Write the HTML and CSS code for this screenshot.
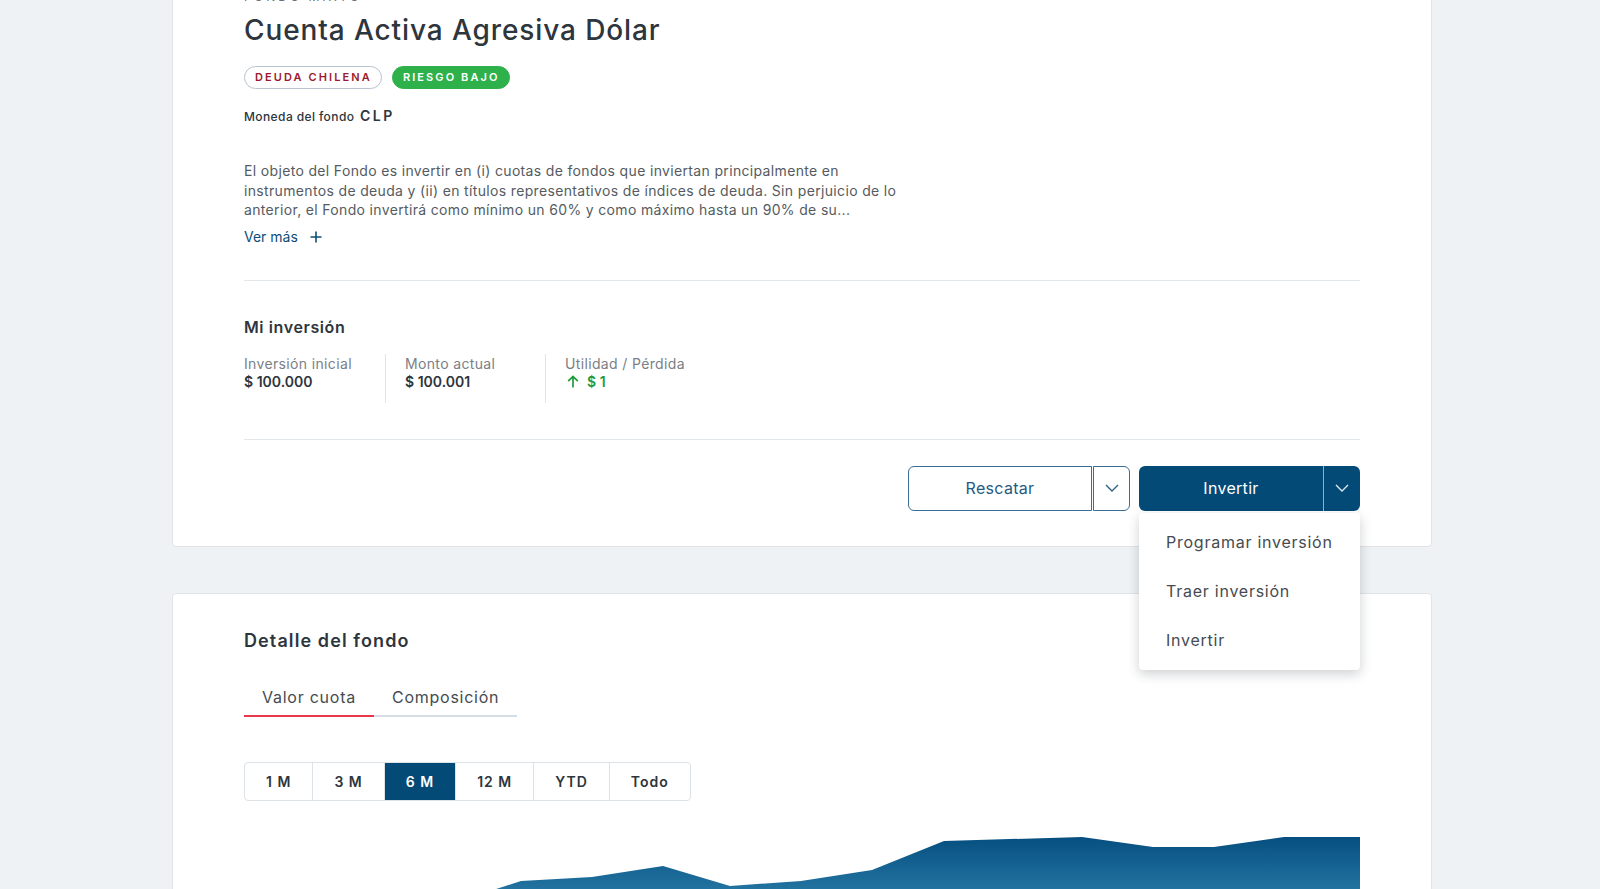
FILE: index.html
```html
<!DOCTYPE html>
<html>
<head>
<meta charset="utf-8" />
<title>Cuenta Activa Agresiva Dólar</title>
<link rel="stylesheet" href="styles.css">
</head>
<body>
<div class="main">

<section class="card fund">
  <div class="kicker">Fondo Mixto</div>
  <h1 class="fund-name">Cuenta Activa Agresiva Dólar</h1>
  <div class="tags">
    <span class="tag tag-outline">Deuda chilena</span>
    <span class="tag tag-green">Riesgo bajo</span>
  </div>
  <p class="currency">Moneda del fondo <b>CLP</b></p>
  <p class="description">El objeto del Fondo es invertir en (i) cuotas de fondos que inviertan principalmente en instrumentos de deuda y (ii) en títulos representativos de índices de deuda. Sin perjuicio de lo anterior, el Fondo invertirá como mínimo un 60% y como máximo hasta un 90% de su...</p>
  <a class="more" href="#">Ver más
    <svg width="12" height="12" viewBox="0 0 12 12"><path d="M6 0.5v11M0.5 6h11" stroke="#0d4d78" stroke-width="1.6" fill="none"/></svg>
  </a>
  <hr />
  <h2 class="section-title">Mi inversión</h2>
  <div class="stats">
    <div class="stat">
      <span class="stat-label">Inversión inicial</span>
      <span class="stat-value">$ 100.000</span>
    </div>
    <div class="stat">
      <span class="stat-label">Monto actual</span>
      <span class="stat-value">$ 100.001</span>
    </div>
    <div class="stat">
      <span class="stat-label">Utilidad / Pérdida</span>
      <span class="stat-value up">
        <svg width="12" height="13" viewBox="0 0 12 13"><path d="M6 12.5V1.5M1.2 6.2L6 1.4l4.8 4.8" stroke="#1f9a3b" stroke-width="1.7" fill="none"/></svg>
        $ 1
      </span>
    </div>
  </div>
  <hr class="second" />
  <div class="actions">
    <div class="split split-outline">
      <a class="split-main" href="#">Rescatar</a>
      <a class="split-toggle" href="#">
        <svg width="14" height="8" viewBox="0 0 14 8"><path d="M1 1l6 6 6-6" stroke="#2f638a" stroke-width="1.4" fill="none"/></svg>
      </a>
    </div>
    <div class="split split-solid">
      <a class="split-main" href="#">Invertir</a>
      <a class="split-toggle" href="#">
        <svg width="14" height="8" viewBox="0 0 14 8"><path d="M1 1l6 6 6-6" stroke="#dfe9f1" stroke-width="1.4" fill="none"/></svg>
      </a>
      <ul class="menu">
        <li>Programar inversión</li>
        <li>Traer inversión</li>
        <li>Invertir</li>
      </ul>
    </div>
  </div>
</section>

<section class="card detail">
  <h2 class="detail-title">Detalle del fondo</h2>
  <div class="tabs">
    <a class="tab active" href="#">Valor cuota</a>
    <a class="tab" href="#">Composición</a>
  </div>
  <div class="periods">
    <a class="period" href="#">1 M</a>
    <a class="period" href="#">3 M</a>
    <a class="period active" href="#">6 M</a>
    <a class="period" href="#">12 M</a>
    <a class="period" href="#">YTD</a>
    <a class="period" href="#">Todo</a>
  </div>
  <svg class="chart" width="1116" height="140" viewBox="0 0 1116 140" preserveAspectRatio="none">
    <defs>
      <linearGradient id="area" x1="0" y1="0" x2="0" y2="1">
        <stop offset="0" stop-color="#064f80" />
        <stop offset="0.55" stop-color="#2a7eaa" />
        <stop offset="1" stop-color="#4b9cc4" />
      </linearGradient>
    </defs>
    <polygon fill="url(#area)" points="0,140 0,118 120,100 246,70 277,60 348,56 419,45 486,65 557,60 628,49 700,20 838,16 909,26 970,26 1040,16 1116,16 1116,140" />
  </svg>
</section>

</div>
</body>
</html>
```

FILE: styles.css
```css
* {
  box-sizing: border-box;
}
body {
  background-color: #eef2f5;
  color: #2d353d;
  font-family: Inter, 'Open Sans', Arial, sans-serif;
  margin: 0;
  overflow: hidden;
}
a {
  color: inherit;
  text-decoration: none;
}
.main {
  display: flex;
  flex-direction: column;
  gap: 46px;
  margin-top: -52px;
  padding-left: 172px;
}
.card {
  background-color: #fff;
  border: 1px solid #e0e4e8;
  border-radius: 4px;
  padding: 40px 71px 35px;
  width: 1260px;
}
.kicker {
  color: #6b7178;
  font-size: 12px;
  letter-spacing: 3px;
  line-height: 16px;
  text-transform: uppercase;
}
.fund-name {
  font-size: 28px;
  font-weight: 500;
  letter-spacing: 0.9px;
  line-height: 36px;
  margin: 7px 0 0;
}
.tags {
  display: flex;
  gap: 10px;
  margin-top: 18px;
}
.tag {
  border-radius: 12px;
  font-size: 11px;
  font-weight: 600;
  height: 23px;
  letter-spacing: 2.1px;
  line-height: 21px;
  padding: 0 9px 0 10px;
  text-transform: uppercase;
}
.tag-outline {
  border: 1px solid #b7c3ce;
  color: #9c1a2f;
}
.tag-green {
  background-color: #2eb14b;
  border: 1px solid #2eb14b;
  color: #fff;
}
.currency {
  font-size: 12px;
  font-weight: 500;
  letter-spacing: 0.4px;
  line-height: 20px;
  margin: 17px 0 0;
}
.currency b {
  font-size: 14px;
  font-weight: 600;
  letter-spacing: 2.5px;
  margin-left: 2px;
}
.description {
  color: #555b61;
  font-size: 14px;
  letter-spacing: 0.34px;
  line-height: 19.5px;
  margin: 34px 0 0;
  width: 660px;
}
.more {
  align-items: center;
  color: #0d4d78;
  display: inline-flex;
  font-size: 14px;
  gap: 12px;
  line-height: 20px;
  margin-top: 7px;
}
hr {
  border: 0 none;
  border-top: 1px solid #e2e7eb;
  margin: 33px 0 0;
}
hr.second {
  margin-top: 36px;
}
.section-title {
  font-size: 16px;
  font-weight: 600;
  letter-spacing: 0.6px;
  line-height: 24px;
  margin: 34px 0 0;
}
.stats {
  display: flex;
  margin-top: 15px;
}
.stat {
  display: flex;
  flex-direction: column;
  padding-bottom: 13px;
  width: 141px;
}
.stat + .stat {
  border-left: 1px solid #dfe4e8;
  padding-left: 19px;
  width: 160px;
}
.stat-label {
  color: #7a8086;
  font-size: 14px;
  letter-spacing: 0.35px;
  line-height: 20px;
}
.stat-value {
  font-size: 14px;
  font-weight: 600;
  line-height: 16px;
}
.stat-value.up {
  align-items: center;
  color: #1f9a3b;
  display: flex;
  gap: 8px;
  padding-left: 2px;
}
.actions {
  display: flex;
  gap: 9px;
  justify-content: flex-end;
  margin-top: 26px;
}
.split {
  display: flex;
  height: 45px;
  position: relative;
}
.split-main {
  align-items: center;
  display: flex;
  font-size: 16px;
  justify-content: center;
  letter-spacing: 0.3px;
  width: 184px;
}
.split-toggle {
  align-items: center;
  display: flex;
  justify-content: center;
  width: 37px;
}
.split-outline .split-main,
.split-outline .split-toggle {
  border: 1.5px solid #3a6d94;
  color: #245a82;
}
.split-outline .split-main {
  border-radius: 6px 0 0 6px;
}
.split-outline .split-toggle {
  border-radius: 0 6px 6px 0;
  margin-left: 1px;
}
.split-solid {
  background-color: #044a77;
  border-radius: 6px;
  color: #fff;
}
.split-solid .split-toggle {
  border-left: 1px solid #8fb0c8;
}
.menu {
  background-color: #fff;
  border-radius: 4px;
  box-shadow: 0 4px 12px rgba(30, 40, 50, .22);
  list-style: none;
  margin: 0;
  padding: 5px 0;
  position: absolute;
  right: 0;
  top: 47px;
  width: 221px;
  z-index: 10;
}
.menu li {
  color: #454b51;
  font-size: 16px;
  letter-spacing: 0.75px;
  line-height: 49px;
  padding-left: 27px;
}
.detail {
  height: 400px;
  padding-top: 35px;
}
.detail-title {
  font-size: 18px;
  font-weight: 600;
  letter-spacing: 1.1px;
  line-height: 24px;
  margin: 0;
}
.tabs {
  display: flex;
  margin-top: 32px;
}
.tab {
  border-bottom: 2px solid #d5dde5;
  color: #454b51;
  font-size: 16px;
  letter-spacing: 0.75px;
  line-height: 24px;
  padding: 0 18px 6px;
}
.tab.active {
  border-bottom-color: #e8364b;
}
.periods {
  border: 1px solid #dde2e7;
  border-radius: 4px;
  display: inline-flex;
  height: 39px;
  margin-top: 45px;
  overflow: hidden;
}
.period {
  align-items: center;
  color: #2d353d;
  display: flex;
  font-size: 14px;
  font-weight: 600;
  letter-spacing: 1px;
  padding: 0 21px;
}
.period + .period {
  border-left: 1px solid #dde2e7;
}
.period.active {
  background-color: #044a77;
  color: #fff;
}
.chart {
  display: block;
  margin-top: 20px;
}
```
